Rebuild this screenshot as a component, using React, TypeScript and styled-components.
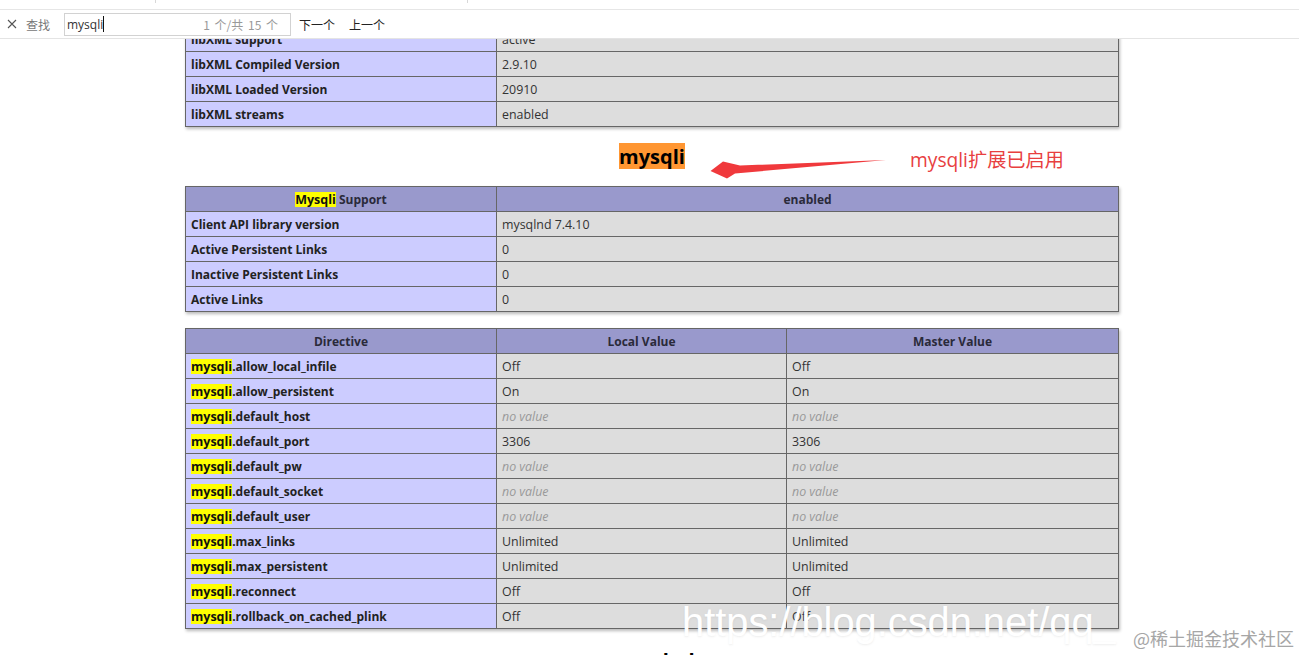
import React from "react";
import styled, { createGlobalStyle } from "styled-components";

const Global = createGlobalStyle`
  html, body { margin: 0; padding: 0; background: #fff; }
  body { font-family: "Open Sans", "Noto Sans CJK SC", sans-serif; color: #222; }
`;

const Page = styled.div`
  position: relative;
  width: 1299px;
  height: 655px;
  overflow: hidden;
  display: flex;
  flex-direction: column;
`;
const TopStrip = styled.div`
  height: 9px;
  flex: none;
  border-bottom: 1px solid #e6e6e6;
  display: flex;
  padding-left: 155px;
  gap: 311px;
`;
const TabEdge = styled.span`
  width: 1px;
  height: 3px;
  background: #d8d8d8;
`;
const FindBar = styled.div`
  position: relative;
  z-index: 2;
  height: 28px;
  flex: none;
  background: #fff;
  border-bottom: 1px solid #e4e4e4;
  display: flex;
  align-items: center;
  padding-left: 7px;
  font-size: 12px;
`;
const CloseIcon = styled.svg`
  width: 10px;
  height: 10px;
  stroke: #555;
  stroke-width: 1.1;
  fill: none;
`;
const FindLabel = styled.span`
  margin-left: 9px;
  width: 38px;
  color: #777;
  font-family: "Noto Sans CJK SC", sans-serif;
`;
const FindInput = styled.div`
  width: 223px;
  height: 21px;
  border: 1px solid #d2d2d2;
  display: flex;
  align-items: center;
  padding-left: 2px;
  font-size: 12px;
  color: #333;
`;
const Caret = styled.span`
  width: 1px;
  height: 16px;
  background: #111;
`;
const Count = styled.span`
  margin-left: auto;
  margin-right: 12px;
  color: #999;
  font-size: 12px;
  word-spacing: 2px;
  font-family: "Noto Sans CJK SC", sans-serif;
`;
const FindButton = styled.span`
  margin-left: ${(p: { $gap: number }) => p.$gap}px;
  color: #222;
  font-family: "Noto Sans CJK SC", sans-serif;
`;
const Content = styled.div`
  flex: 1;
  min-height: 0;
  overflow: hidden;
  display: flex;
  flex-direction: column;
  align-items: flex-start;
  padding-left: 185px;
  margin-top: -13px;
`;
const InfoTable = styled.table`
  width: 934px;
  flex: none;
  table-layout: fixed;
  border-collapse: collapse;
  box-shadow: 1px 2px 3px #bbb;
  font-size: 12.4px;
  margin-bottom: ${(p: { $after: number }) => p.$after}px;
`;
const Head = styled.th`
  height: 25px;
  padding: 0 5px;
  border: 1px solid #666;
  background: #9999cc;
  font-weight: 700;
  font-size: 12px;
  text-align: center;
  box-sizing: border-box;
  color: #2a2a3a;
`;
const Label = styled.td`
  height: 25px;
  padding: 0 5px;
  border: 1px solid #666;
  background: #ccccff;
  font-weight: 700;
  font-size: 12px;
  box-sizing: border-box;
  color: #222;
  white-space: nowrap;
`;
const Value = styled.td`
  height: 25px;
  padding: 0 5px;
  border: 1px solid #666;
  background: #dddddd;
  box-sizing: border-box;
  color: #333;
`;
const NoValue = styled.i`
  color: #999;
`;
const Mark = styled.mark`
  display: inline-block;
  background: #ffff00;
  color: #111;
  font-size: 12.5px;
  line-height: 15px;
`;
const HeadingRow = styled.div`
  width: 934px;
  height: ${(p: { $h: number }) => p.$h}px;
  flex: none;
  display: flex;
  justify-content: center;
  align-items: center;
  padding-bottom: 2px;
  box-sizing: border-box;
`;
const Heading = styled.h2`
  margin: 0;
  padding-top: 1px;
  font-size: 20px;
  line-height: 25px;
  font-weight: 700;
  color: #000;
  background: ${(p: { $found?: boolean }) => (p.$found ? "#ff9632" : "transparent")};
`;
const Arrow = styled.svg`
  position: absolute;
  left: 700px;
  top: 150px;
  width: 200px;
  height: 35px;
`;
const Note = styled.div`
  position: absolute;
  left: 910px;
  top: 147px;
  font-size: 19.2px;
  line-height: 25px;
  color: #e8403f;
  font-family: "Open Sans", "Noto Sans CJK SC", sans-serif;
`;
const UrlWatermark = styled.div`
  position: absolute;
  left: 682px;
  top: 599px;
  font-size: 39.8px;
  line-height: 46px;
  font-family: "Liberation Sans", sans-serif;
  color: #fff;
  text-shadow: 0 1px 2px rgba(120, 120, 120, 0.12);
  white-space: nowrap;
`;
const SiteWatermark = styled.div`
  position: absolute;
  left: 1133px;
  top: 625px;
  font-size: 18px;
  line-height: 26px;
  color: #a6a6a6;
  font-family: "Noto Sans CJK SC", sans-serif;
  white-space: nowrap;
`;

type Cell = string | null;
const libxml: [string, string][] = [
  ["libXML support", "active"],
  ["libXML Compiled Version", "2.9.10"],
  ["libXML Loaded Version", "20910"],
  ["libXML streams", "enabled"],
];
const client: [string, string][] = [
  ["Client API library version", "mysqlnd 7.4.10"],
  ["Active Persistent Links", "0"],
  ["Inactive Persistent Links", "0"],
  ["Active Links", "0"],
];
const directives: [string, Cell][] = [
  ["allow_local_infile", "Off"],
  ["allow_persistent", "On"],
  ["default_host", null],
  ["default_port", "3306"],
  ["default_pw", null],
  ["default_socket", null],
  ["default_user", null],
  ["max_links", "Unlimited"],
  ["max_persistent", "Unlimited"],
  ["reconnect", "Off"],
  ["rollback_on_cached_plink", "Off"],
];

const DirectiveValue = ({ v }: { v: Cell }) => (
  <Value>{v === null ? <NoValue>no value</NoValue> : v}</Value>
);

export default function App() {
  return (
    <Page>
      <Global />
      <TopStrip>
        <TabEdge />
        <TabEdge />
      </TopStrip>
      <FindBar>
        <CloseIcon viewBox="0 0 10 10">
          <path d="M1 1 L9 9 M9 1 L1 9" />
        </CloseIcon>
        <FindLabel>查找</FindLabel>
        <FindInput>
          mysqli
          <Caret />
          <Count>1 个/共 15 个</Count>
        </FindInput>
        <FindButton $gap={8}>下一个</FindButton>
        <FindButton $gap={14}>上一个</FindButton>
      </FindBar>
      <Content>
        <InfoTable $after={0}>
          <colgroup>
            <col style={{ width: 311 }} />
            <col />
          </colgroup>
          <tbody>
            {libxml.map(([k, v]) => (
              <tr key={k}>
                <Label>{k}</Label>
                <Value>{v}</Value>
              </tr>
            ))}
          </tbody>
        </InfoTable>
        <HeadingRow $h={59}>
          <Heading $found>mysqli</Heading>
        </HeadingRow>
        <InfoTable $after={16}>
          <colgroup>
            <col style={{ width: 311 }} />
            <col />
          </colgroup>
          <thead>
            <tr>
              <Head>
                <Mark>Mysqli</Mark> Support
              </Head>
              <Head>enabled</Head>
            </tr>
          </thead>
          <tbody>
            {client.map(([k, v]) => (
              <tr key={k}>
                <Label>{k}</Label>
                <Value>{v}</Value>
              </tr>
            ))}
          </tbody>
        </InfoTable>
        <InfoTable $after={0}>
          <colgroup>
            <col style={{ width: 311 }} />
            <col style={{ width: 290 }} />
            <col />
          </colgroup>
          <thead>
            <tr>
              <Head>Directive</Head>
              <Head>Local Value</Head>
              <Head>Master Value</Head>
            </tr>
          </thead>
          <tbody>
            {directives.map(([k, v]) => (
              <tr key={k}>
                <Label>
                  <Mark>mysqli</Mark>.{k}
                </Label>
                <DirectiveValue v={v} />
                <DirectiveValue v={v} />
              </tr>
            ))}
          </tbody>
        </InfoTable>
        <HeadingRow $h={64}>
          <Heading>mysqlnd</Heading>
        </HeadingRow>
      </Content>
      <Arrow viewBox="0 0 200 35">
        <path d="M186 10 L40 15.5 L23 11.5 L10.5 21 L27 28.5 L35 23.5 Z" fill="#f0393c" />
      </Arrow>
      <Note>mysqli扩展已启用</Note>
      <UrlWatermark>https://blog.csdn.net/qq_</UrlWatermark>
      <SiteWatermark>@稀土掘金技术社区</SiteWatermark>
    </Page>
  );
}
